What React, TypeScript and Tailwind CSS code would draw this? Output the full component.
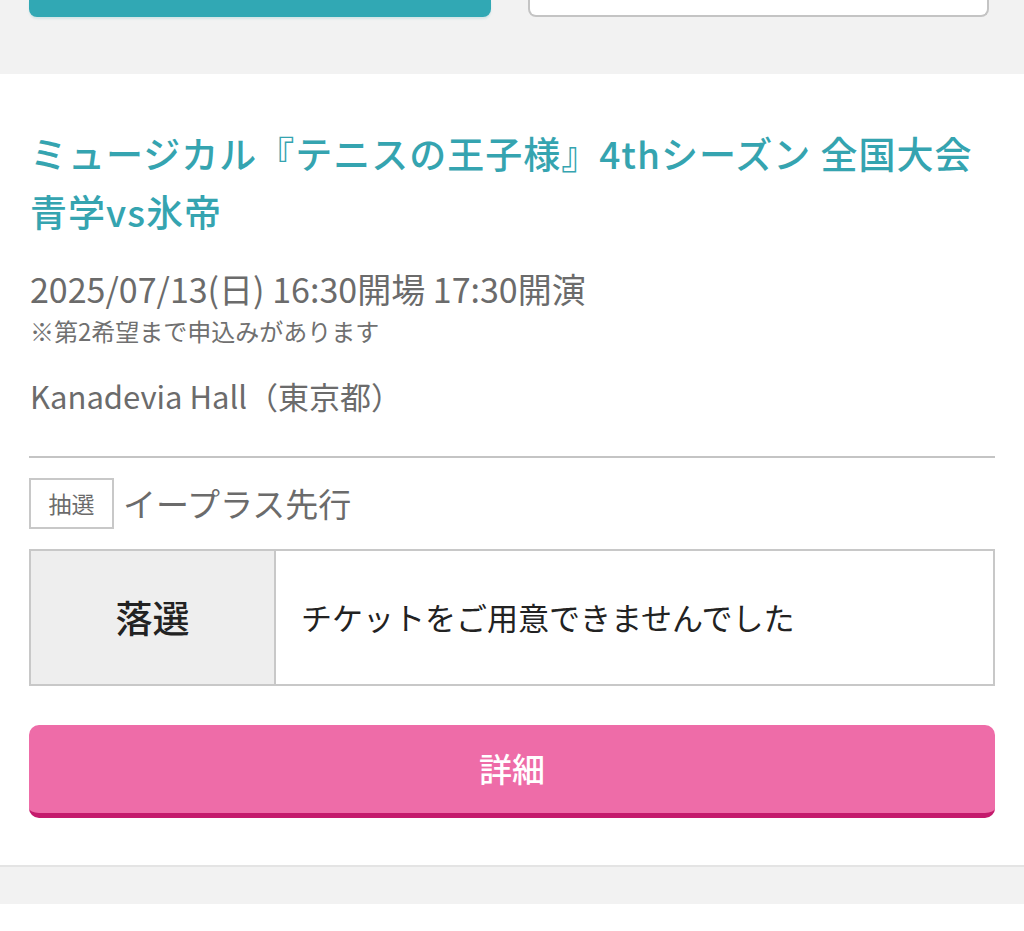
import React from 'react';

const font = { fontFamily: '"Noto Sans CJK JP", "Noto Sans", sans-serif' };

export default function App() {
    return (
        <div className="min-h-[931px] bg-white" style={font}>
            <div className="bg-[#f2f2f2] h-[74px] px-[29px] flex gap-[37px]">
                <div className="w-[462px] h-[17px] bg-[#31a8b4] rounded-b-[8px] shadow-[0_2px_2px_rgba(49,168,180,0.15)]"></div>
                <div className="w-[461px] h-[17px] bg-white border-x-2 border-b-2 border-[#c4c4c4] rounded-b-[8px]"></div>
            </div>

            <div className="bg-white px-[29px] pt-[50px] pb-[47px] border-b-2 border-[#e4e4e4]">
                <h2 className="text-[37px] tracking-[1px] leading-[58px] font-medium text-[#35a4b0] pl-px">
                    ミュージカル『テニスの王子様』4thシーズン 全国大会<br />青学vs氷帝
                </h2>

                <p className="mt-[26px] text-[34px] leading-[46px] text-[#6b6b6b] pl-px">
                    2025/07/13(日) 16:30開場 17:30開演
                </p>
                <p className="mt-[3px] text-[24px] leading-[32px] text-[#707070] pl-px">
                    ※第2希望まで申込みがあります
                </p>
                <p className="mt-[26px] text-[31px] leading-[46px] text-[#6b6b6b] pl-px">
                    Kanadevia Hall（東京都）
                </p>

                <div className="mt-[37px] h-[2px] bg-[#c4c4c4]"></div>

                <div className="mt-[20px] flex items-center gap-[9px]">
                    <span className="w-[85px] h-[51px] border-2 border-[#c8c8c8] flex items-center justify-center text-[23px] text-[#6b6b6b]">
                        抽選
                    </span>
                    <span className="text-[33px] text-[#6b6b6b]">イープラス先行</span>
                </div>

                <div className="mt-[20px] flex h-[137px] border-2 border-[#c8c8c8]">
                    <div className="w-[245px] bg-[#eeeeee] border-r-2 border-[#c8c8c8] flex items-center justify-center text-[37px] font-medium text-[#222]">
                        落選
                    </div>
                    <div className="flex-1 flex items-center pl-[25px] text-[31px] text-[#222]">
                        チケットをご用意できませんでした
                    </div>
                </div>

                <button className="mt-[39px] w-full h-[93px] rounded-[10px] bg-[#ee6ca8] border-b-[5px] border-[#c41a6c] text-white text-[33px] font-medium flex items-center justify-center">
                    詳細
                </button>
            </div>

            <div className="h-[37px] bg-[#f2f2f2]"></div>
        </div>
    );
}
